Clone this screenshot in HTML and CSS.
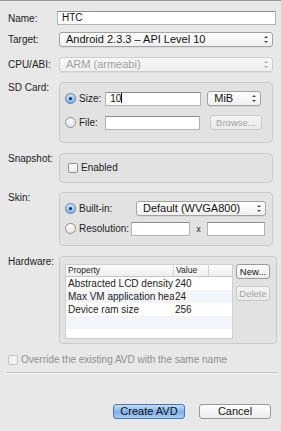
FILE: index.html
```html
<!DOCTYPE html>
<html lang="en">
<head>
    <meta charset="UTF-8">
    <title>Create new Android Virtual Device (AVD)</title>
    <link rel="stylesheet" href="styles.css">
</head>
<body>
    <div class="dialog">
        <div class="row name">
            <label class="label">Name:</label>
            <div class="text-input wide">HTC</div>
        </div>
        <div class="row target">
            <label class="label">Target:</label>
            <div class="select inset">Android 2.3.3 – API Level 10<span class="arrows"></span></div>
        </div>
        <div class="row cpu">
            <label class="label">CPU/ABI:</label>
            <div class="select inset disabled">ARM (armeabi)<span class="arrows"></span></div>
        </div>

        <div class="row top sd">
            <label class="label">SD Card:</label>
            <div class="group">
                <div class="line">
                    <span class="radio on"></span><span class="opt">Size:</span>
                    <div class="text-input size">10<span class="caret"></span></div>
                    <div class="select unit">MiB<span class="arrows"></span></div>
                </div>
                <div class="line">
                    <span class="radio"></span><span class="opt">File:</span>
                    <div class="text-input file"></div>
                    <div class="button small off">Browse...</div>
                </div>
            </div>
        </div>

        <div class="row top snap">
            <label class="label">Snapshot:</label>
            <div class="group">
                <div class="line">
                    <span class="check"></span><span class="opt">Enabled</span>
                </div>
            </div>
        </div>

        <div class="row top skin">
            <label class="label">Skin:</label>
            <div class="group">
                <div class="line">
                    <span class="radio on"></span><span class="opt built">Built-in:</span>
                    <div class="select skin-select">Default (WVGA800)<span class="arrows"></span></div>
                </div>
                <div class="line">
                    <span class="radio"></span><span class="opt res">Resolution:</span>
                    <div class="text-input res-w"></div>
                    <span class="times">x</span>
                    <div class="text-input res-h"></div>
                </div>
            </div>
        </div>

        <div class="row top hw">
            <label class="label">Hardware:</label>
            <div class="group hw-group">
                <div class="table">
                    <div class="thead">
                        <span class="c1">Property</span><span class="c2">Value</span><span class="c3"></span>
                    </div>
                    <div class="tr"><span class="c1">Abstracted LCD density</span><span class="c2">240</span></div>
                    <div class="tr alt"><span class="c1">Max VM application hea</span><span class="c2">24</span></div>
                    <div class="tr"><span class="c1">Device ram size</span><span class="c2">256</span></div>
                    <div class="tr alt"></div>
                    <div class="tr"></div>
                </div>
                <div class="side">
                    <div class="button small">New...</div>
                    <div class="button small off">Delete</div>
                </div>
            </div>
        </div>

        <div class="override">
            <span class="check faded"></span><span>Override the existing AVD with the same name</span>
        </div>
        <div class="sep"></div>

        <div class="actions">
            <div class="button primary">Create AVD</div>
            <div class="button">Cancel</div>
        </div>
    </div>
</body>
</html>
```
FILE: styles.css
```css
body {
    margin: 0;
    padding: 0;
    background: #e8e8e8;
    font-family: 'Liberation Sans', Arial, sans-serif;
    font-size: 10px;
    color: #222;
}
.dialog {
    width: 281px;
    height: 431px;
    box-sizing: border-box;
    border-top: 1px solid #9a9a9a;
    padding: 10px 5px 0 8px;
}
.row {
    display: flex;
    align-items: center;
}
.row.name {
    margin-bottom: 7px;
}
.row.target {
    margin-bottom: 10px;
}
.row.cpu {
    margin-bottom: 10px;
}
.row.sd {
    margin-bottom: 10px;
}
.row.snap {
    margin-bottom: 9px;
}
.row.skin {
    margin-bottom: 10px;
}
.row.top {
    align-items: flex-start;
}
.label {
    width: 49px;
    flex: none;
}
.row.top .label {
    padding-top: 0;
}
.text-input {
    height: 14px;
    box-sizing: border-box;
    background: #fff;
    border: 1px solid #b4b4b4;
    border-top-color: #8e8e8e;
    padding: 0 4px;
    line-height: 12px;
    color: #111;
}
.text-input.wide {
    flex: 1;
}
.select {
    position: relative;
    height: 15px;
    box-sizing: border-box;
    border: 1px solid #a2a2a2;
    border-radius: 3px;
    background: linear-gradient(#ffffff, #f0f0f0);
    padding: 0 14px 0 6px;
    line-height: 13px;
    font-size: 11px;
    color: #111;
    box-shadow: 0 1px 0 rgba(0, 0, 0, 0.05);
}
.select.inset {
    flex: 1;
    margin: 0 3px 0 2px;
}
.select.disabled {
    color: #a0a0a0;
    border-color: #cdcdcd;
    background: linear-gradient(#f7f7f7, #efefef);
}
.arrows {
    position: absolute;
    right: 5px;
    top: 3px;
    width: 3px;
    height: 7px;
}
.arrows::before, .arrows::after {
    content: '';
    position: absolute;
    left: 0;
    border-left: 2px solid transparent;
    border-right: 2px solid transparent;
}
.arrows::before {
    top: 0;
    border-bottom: 2px solid #444;
}
.arrows::after {
    bottom: 0;
    border-top: 2px solid #444;
}
.disabled .arrows::before {
    border-bottom-color: #aaa;
}
.disabled .arrows::after {
    border-top-color: #aaa;
}
.group {
    flex: 1;
    margin: 0 3px 0 2px;
    box-sizing: border-box;
    border: 1px solid #cbcbcb;
    border-radius: 4px;
    background: #e2e2e2;
    padding: 8px 6px 8px 5px;
}
.sd .group {
    height: 61px;
}
.line {
    display: flex;
    align-items: center;
    height: 15px;
}
.line + .line {
    margin-top: 9px;
}
.radio {
    width: 11px;
    height: 11px;
    box-sizing: border-box;
    border-radius: 50%;
    border: 1px solid #8d8d8d;
    background: linear-gradient(#fefefe, #e4e4e4);
    flex: none;
    position: relative;
}
.radio.on {
    border-color: #5a7fb3;
    background: linear-gradient(#cde3fa, #7eb2ea);
}
.radio.on::after {
    content: '';
    position: absolute;
    left: 3px;
    top: 3px;
    width: 3px;
    height: 3px;
    border-radius: 50%;
    background: #1b2a3c;
}
.opt {
    margin-left: 3px;
}
.text-input.size {
    width: 96px;
    margin-left: 4px;
    position: relative;
}
.caret {
    display: inline-block;
    width: 1px;
    height: 10px;
    background: #000;
    vertical-align: -1px;
}
.select.unit {
    width: 54px;
    margin-left: 6px;
}
.text-input.file {
    width: 95px;
    margin-left: 7px;
}
.button {
    height: 15px;
    box-sizing: border-box;
    border: 1px solid #9a9a9a;
    border-radius: 3px;
    background: linear-gradient(#ffffff, #ececec);
    text-align: center;
    line-height: 13px;
    font-size: 11px;
    color: #111;
}
.button.small {
    font-size: 9.5px;
}
.button.off {
    color: #a3a3a3;
    border-color: #c8c8c8;
    background: linear-gradient(#f4f4f4, #ebebeb);
}
.line .button {
    width: 52px;
    margin-left: 10px;
}
.snap .group {
    height: 30px;
    padding-top: 6px;
}
.check {
    width: 10px;
    height: 10px;
    box-sizing: border-box;
    border: 1px solid #8e8e8e;
    border-radius: 2px;
    background: linear-gradient(#ffffff, #ececec);
    flex: none;
    margin-left: 3px;
}
.skin .group {
    height: 54px;
}
.skin .line + .line {
    margin-top: 5px;
}
.opt.built {
    width: 54px;
}
.select.skin-select {
    width: 130px;
    margin-left: 3px;
}
.opt.res {
    width: 52px;
}
.text-input.res-w {
    width: 59px;
}
.times {
    width: 17px;
    text-align: center;
    font-size: 9px;
}
.text-input.res-h {
    width: 58px;
}
.hw-group {
    height: 88px;
    display: flex;
    padding: 7px 6px 4px 5px;
}
.table {
    width: 166px;
    background: #fff;
    border: 1px solid #cfcfcf;
    font-size: 10px;
    overflow: hidden;
}
.thead {
    display: flex;
    height: 11px;
    line-height: 11px;
    font-size: 8.5px;
    background: linear-gradient(#ffffff, #eeeeee);
    border-bottom: 1px solid #c6c6c6;
}
.thead span {
    border-right: 1px solid #d4d4d4;
    padding-left: 2px;
    box-sizing: border-box;
}
.c1 {
    width: 108px;
    flex: none;
    white-space: nowrap;
    overflow: hidden;
    padding-left: 2px;
    box-sizing: border-box;
}
.c2 {
    width: 35px;
    flex: none;
    padding-left: 1px;
}
.c3 {
    flex: 1;
    border-right: none !important;
}
.tr {
    display: flex;
    height: 13px;
    line-height: 13px;
}
.tr.alt {
    background: #f2f5fa;
}
.side {
    margin-left: 3px;
    display: flex;
    flex-direction: column;
    gap: 7px;
}
.side .button {
    width: 34px;
    height: 15px;
}
.override {
    display: flex;
    align-items: center;
    margin-top: 10px;
    color: #8f8f8f;
}
.check.faded {
    margin-left: 0;
    margin-right: 3px;
    border-color: #c2c2c2;
    background: #f1f1f1;
}
.sep {
    margin: 7px -1px 0 -1px;
    border-top: 1px solid #bdbdbd;
    border-bottom: 1px solid #f6f6f6;
}
.actions {
    display: flex;
    justify-content: flex-end;
    gap: 14px;
    margin-top: 30px;
    padding-right: 5px;
}
.actions .button {
    width: 72px;
}
.button.primary {
    border-color: #4d79b8;
    background: linear-gradient(#c4ddf7, #7fb0e8 55%, #a8cdf3);
}
```
